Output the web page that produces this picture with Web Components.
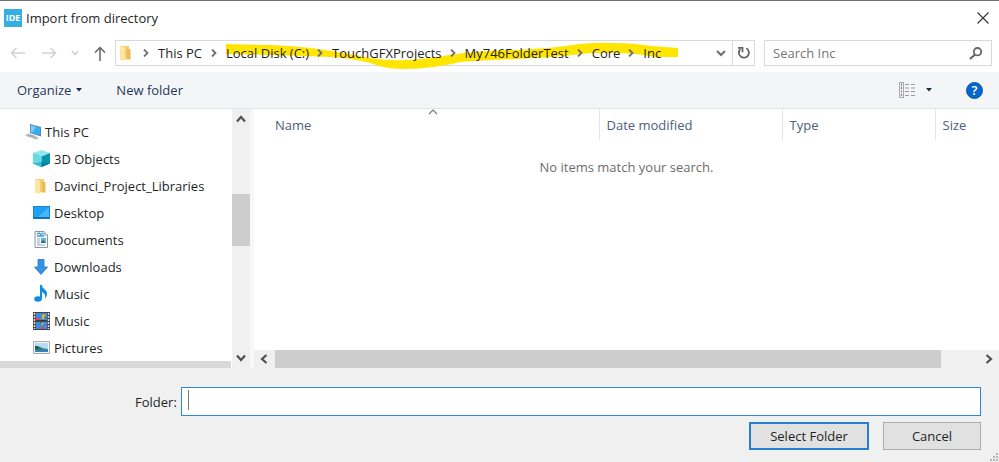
<!DOCTYPE html>
<html lang="en">
<head>
<meta charset="utf-8">
<title>Import from directory</title>
<style>
  html, body { margin: 0; height: 100%; }
  body { font: 13px/20px "Open Sans", "Noto Sans", sans-serif; color: #1f1f1f; }
</style>
</head>
<body>
<import-dialog>
  <title-bar slot="title">Import from directory</title-bar>
  <address-bar slot="address">
    <path-crumb>This PC</path-crumb>
    <path-crumb slot="marked">Local Disk (C:)</path-crumb>
    <path-crumb slot="marked">TouchGFXProjects</path-crumb>
    <path-crumb slot="marked">My746FolderTest</path-crumb>
    <path-crumb slot="marked">Core</path-crumb>
    <path-crumb slot="marked">Inc</path-crumb>
  </address-bar>
  <command-bar slot="commands"></command-bar>
  <nav-tree slot="tree">
    <tree-item icon="pc" root>This PC</tree-item>
    <tree-item icon="cube">3D Objects</tree-item>
    <tree-item icon="folder">Davinci_Project_Libraries</tree-item>
    <tree-item icon="desktop">Desktop</tree-item>
    <tree-item icon="document">Documents</tree-item>
    <tree-item icon="download">Downloads</tree-item>
    <tree-item icon="note">Music</tree-item>
    <tree-item icon="film">Music</tree-item>
    <tree-item icon="picture">Pictures</tree-item>
  </nav-tree>
  <file-list slot="files">No items match your search.</file-list>
  <folder-form slot="form"></folder-form>
</import-dialog>

<script>
// Icon artwork, keyed by name: [viewBox width, viewBox height, markup]
const ICONS = {
  ide: [18, 18, `<rect width="18" height="18" fill="#35aee2"/>
    <text x="9" y="12" text-anchor="middle" font-family="Open Sans, sans-serif" font-size="9" font-weight="700" fill="#fff">IDE</text>`],
  close: [12, 12, `<path d="M.5.5l11 11M11.5.5l-11 11" stroke="#333" stroke-width="1.1"/>`],
  back: [16, 12, `<path d="M15 6H1.5M6.5 1l-5 5 5 5" fill="none" stroke="#d2d2d2" stroke-width="1.5"/>`],
  forward: [16, 12, `<path d="M1 6h13.500M9.500 1l5 5-5 5" fill="none" stroke="#d2d2d2" stroke-width="1.5"/>`],
  recent: [8, 6, `<path d="M1 1l3 3.500L7 1" fill="none" stroke="#cfcfcf" stroke-width="1.6"/>`],
  up: [12, 15, `<path d="M6 15V1.500M1 6.500l5-5 5 5" fill="none" stroke="#666" stroke-width="1.5"/>`],
  crumb: [6, 8, `<path d="M1 .5L4.500 4 1 7.500" fill="none" stroke="#707070" stroke-width="1.8"/>`],
  drop: [10, 7, `<path d="M1 1l4 4 4-4" fill="none" stroke="#707070" stroke-width="2"/>`],
  refresh: [14, 14, `<path d="M9.300 2.300A5 5 0 1 1 3.300 3.200" fill="none" stroke="#666" stroke-width="1.8"/><path d="M1 1.800h4.500v4.500" fill="none" stroke="#666" stroke-width="1.8"/>`],
  search: [14, 13, `<circle cx="8.500" cy="4.700" r="3.700" fill="none" stroke="#666" stroke-width="1.8"/><path d="M6 7.500L1 12" stroke="#666" stroke-width="2.2"/>`],
  caret: [6, 4, `<path d="M0 0h6L3 3.500z" fill="#17305a"/>`],
  view: [16, 16, `<rect x=".5" y=".5" width="4" height="15" fill="#eee" stroke="#aaa"/>
    <path d="M2 2.500h1M2 13h1" stroke="#557a9e" stroke-width="2"/><path d="M2 6h1" stroke="#4c9a62" stroke-width="2"/><path d="M2 9.500h1" stroke="#e46a45" stroke-width="2"/>
    <path d="M6 2.500h10M6 6h10M6 9.500h10M6 13.500h10" stroke="#9a9a9a" stroke-dasharray="4 2"/>`],
  help: [17, 17, `<circle cx="8.500" cy="8.500" r="8" fill="#0666cc" stroke="#155aa6"/>
    <text x="8.500" y="13" text-anchor="middle" font-family="Open Sans, sans-serif" font-size="13" font-weight="600" fill="#fff">?</text>`],
  sort: [10, 6, `<path d="M1 5l4-4 4 4" fill="none" stroke="#777" stroke-width="1.2"/>`],
  arrow: [10, 8, `<path d="M1 6.500l4-4.500 4 4.500" fill="none" stroke="#505050" stroke-width="2.2"/>`],
  grip: [9, 9, `<path d="M6 0h2v2H6zM6 3h2v2H6zM3 3h2v2H3zM0 6h2v2H0zM3 6h2v2H3zM6 6h2v2H6z" fill="#b5b5b5"/>`],
  folder: [16, 18, `<path d="M2 2h9v13l-9 1z" fill="#f4cd70"/><path d="M9 5h3.500v10.500H9z" fill="#eabb54"/><path d="M2 2l5 1.500V17l-5-1.500z" fill="#ffe6a0"/>`],
  pc: [18, 16, `<path d="M6 0l11 3v9.500L6 9z" fill="#5b87a7"/><path d="M6.800 1.200L16 3.800v7.300L6.800 8.200z" fill="#36aef5"/><path d="M6.800 1.200L12 2.700 8.500 8.600l-1.700-.5z" fill="#77cafa"/>
    <path d="M1 11l4-1.500 8 2.700-3.500 2z" fill="#c2cbd2"/><path d="M2 11.500l7 2M4 10.600l7 2" stroke="#8797a3" stroke-width=".7"/><path d="M8 14l4 1.500 3-1.500-3-1z" fill="#a8b4bd"/>`],
  cube: [17, 17, `<path d="M8.500 0L17 3 8.500 6.500 0 3z" fill="#8ee9ed"/><path d="M0 3l8.500 3.500V17L0 13.500z" fill="#28b9cd"/><path d="M17 3L8.500 6.500V17L17 13.500z" fill="#0793ad"/>
    <path d="M0 3l8.500 3.500v5.500L0 13.500z" fill="#65dce4"/><path d="M8.500 12L17 13.500 8.500 17 0 13.500z" fill="#39bccb"/><path d="M8.500 12l8.500 1.500L8.500 17z" fill="#087f9d"/>`],
  desktop: [17, 13, `<path d="M0 0h17v13H0z" fill="#1684d2"/><path d="M1 1h15v10H1z" fill="#20a0f3"/><path d="M16 1v10H5z" fill="#48b4fa"/><path d="M1 12h15" stroke="#0866a7"/>`],
  document: [14, 17, `<path d="M1 .5h9L13.500 4v12.500H1z" fill="#f6f8f9" stroke="#8c969d"/><path d="M10 .5V4h3.500" fill="#d4dade" stroke="#9da7ad"/>
    <path d="M3 5h7M3 3l2-1 2 1.500L9 2" fill="none" stroke="#3aa4d8" stroke-width="1.4"/><path d="M3 8h3M3 10h3M3 12h3M3 14h8" stroke="#9daebb"/><path d="M7 7h5v5H7z" fill="#5cb6df"/><path d="M7 11l2-2 3 3H7z" fill="#3d6b77"/>`],
  download: [14, 16, `<path d="M4 .5h6V8h3.500L7 15.500.5 8H4z" fill="#3294e4" stroke="#2476bd" stroke-width=".8"/>`],
  note: [14, 17, `<ellipse cx="4" cy="14" rx="3.800" ry="2.800" fill="#0c8fe5"/><path d="M6 0h2c0 4 5 4 5 9 0 2-1 3.500-2 4.500C12 9.500 10 8 8 7v7H6z" fill="#0c8fe5"/>`],
  film: [17, 18, `<path d="M0 0h17v18H0z" fill="#444"/><path d="M1.500 1v16M15.500 1v16" stroke="#ddd" stroke-width="1.5" stroke-dasharray="2 1"/>
    <path d="M3 1h11v7H3zM3 9.500h11V17H3z" fill="#4288dd"/><path d="M3 6h3l2 2H3zM9 14l2 1-1 2H8z" fill="#da4a43"/><path d="M9 3l2-1 2 2-2 3H9zM8 11l3 0-1 2-2-1z" fill="#e9b735"/><path d="M11 4l2 1-1 2zM7 10l2 1-2 1z" fill="#267f45"/><path d="M3 9h11" stroke="#263347"/>`],
  picture: [17, 13, `<path d="M.5.500h16v12H.5z" fill="#f4f4f4" stroke="#aaa"/><path d="M2 2h13v9H2z" fill="#b6dcf4"/><path d="M2 5c4-1 5 3 13 3v3H2z" fill="#32766c"/><path d="M2 9l13-1v3H2z" fill="#3186b7"/><path d="M2 5l5 2-5 1z" fill="#235044"/>`]
};

function icon(name) {
  const [w, h, body] = ICONS[name];
  return `<svg class="icon-${name}" width="${w}" height="${h}" viewBox="0 0 ${w} ${h}" aria-hidden="true">${body}</svg>`;
}

const BASE = `
  * { box-sizing: border-box; }
  svg { display: block; flex: none; }
  button { font: inherit; color: inherit; border: 0; padding: 0; background: none; display: flex; align-items: center; justify-content: center; }
  input { font: inherit; color: inherit; border: 0; padding: 0; outline: 0; min-width: 0; }
  a { color: inherit; text-decoration: none; }
`;

class BaseElement extends HTMLElement {
  constructor() {
    super();
    this.attachShadow({ mode: 'open' });
  }

  connectedCallback() {
    this.shadowRoot.innerHTML = `<style>${BASE}</style>${this.template()}`;
  }
}

class ImportDialog extends BaseElement {
  template() {
    return `
      <style>
        :host { display: flex; flex-direction: column; min-height: 100vh; background: #fff; border-top: 1px solid #737373; box-sizing: border-box; }
        main { display: flex; flex: 1; border-top: 1px solid #e3e6e9; }
        slot[name="files"]::slotted(*) { flex: 1; min-width: 0; }
      </style>
      <slot name="title"></slot>
      <slot name="address"></slot>
      <slot name="commands"></slot>
      <main>
        <slot name="tree"></slot>
        <slot name="files"></slot>
      </main>
      <slot name="form"></slot>
    `;
  }
}

class TitleBar extends BaseElement {
  template() {
    return `
      <style>
        :host { display: flex; align-items: center; height: 33px; padding: 0 10px 0 4px; gap: 4px; }
        h1 { flex: 1; margin: 0; font: inherit; }
        button { height: 33px; }
      </style>
      ${icon('ide')}
      <h1><slot></slot></h1>
      <button aria-label="Close">${icon('close')}</button>
    `;
  }
}

class PathCrumb extends BaseElement {
  template() {
    return `
      <style>
        :host { display: flex; align-items: center; gap: 9px; }
        a { white-space: nowrap; }
      </style>
      ${icon('crumb')}
      <a href="#"><slot></slot></a>
    `;
  }
}

class AddressBar extends BaseElement {
  template() {
    return `
      <style>
        :host { display: flex; align-items: center; height: 38px; padding: 0 7px 0 10px; gap: 9px; }
        .history { display: flex; align-items: center; height: 26px; width: 96px; justify-content: space-between; }
        .box { display: flex; align-items: center; height: 26px; border: 1px solid #d9d9d9; }
        .path { flex: 1; padding-left: 2px; min-width: 0; }
        .crumbs { display: flex; align-items: center; gap: 9px; flex: 1; padding-left: 9px; }
        .marked { position: relative; display: flex; gap: 8px; }
        .marked slot { display: contents; }
        ::slotted(*) { position: relative; }
        .marker { position: absolute; left: 15px; top: -1px; width: calc(100% + 2px); height: 28px; }
        .recent-paths { width: 22px; height: 24px; }
        .reload { width: 22px; height: 24px; border-left: 1px solid #d9d9d9; }
        .search-box { width: 228px; padding: 0 8px; }
        .search-box input { flex: 1; }
        .search-box input::placeholder { color: #767676; opacity: 1; }
      </style>
      <div class="history">
        <button aria-label="Back">${icon('back')}</button>
        <button aria-label="Forward">${icon('forward')}</button>
        <button aria-label="Recent locations">${icon('recent')}</button>
        <button aria-label="Up">${icon('up')}</button>
      </div>
      <div class="box path">
        ${icon('folder')}
        <nav class="crumbs" aria-label="Path">
          <slot></slot>
          <div class="marked">
            <svg class="marker" viewBox="226 42 451 28" preserveAspectRatio="none" aria-hidden="true">
              <path fill="#ffe500" d="M226 44L270 45Q300 46 325 50T370 58Q390 61 405 60Q430 59 448 55Q475 51 510 50Q540 49 565 46Q590 42 612 43Q632 43 650 46L677 48V57L655 57Q640 54 620 53Q598 52 580 54Q550 58 515 59Q480 60 460 62Q430 69 405 69Q384 69 370 63Q350 58 330 57Q280 55 226 54Z"/>
            </svg>
            <slot name="marked"></slot>
          </div>
        </nav>
        <button class="recent-paths" aria-label="Previous locations">${icon('drop')}</button>
        <button class="reload" aria-label="Refresh">${icon('refresh')}</button>
      </div>
      <label class="box search-box">
        <input type="search" placeholder="Search Inc" aria-label="Search Inc">
        ${icon('search')}
      </label>
    `;
  }
}

class CommandBar extends BaseElement {
  template() {
    return `
      <style>
        :host { display: flex; align-items: center; height: 36px; padding: 0 16px 0 17px; background: #f4f5f7; color: #1e395b; }
        .organize { gap: 5px; margin-right: 34px; }
        .view { gap: 11px; margin: 0 34px 0 auto; }
      </style>
      <button class="organize">Organize ${icon('caret')}</button>
      <button>New folder</button>
      <button class="view" aria-label="Change your view">${icon('view')}${icon('caret')}</button>
      <button aria-label="Help">${icon('help')}</button>
    `;
  }
}

class ScrollBar extends BaseElement {
  template() {
    // before / thumb / after are the relative lengths of the parts of the track
    const part = name => this.getAttribute(name);
    const vertical = !this.hasAttribute('horizontal');
    return `
      <style>
        :host { display: flex; flex-direction: ${vertical ? 'column' : 'row'}; flex: none; background: #f0f0f0; ${vertical ? 'width' : 'height'}: 18px; }
        button { flex: none; ${vertical ? 'height: 20px; width: 18px' : 'width: 20px; height: 18px'}; }
        button:first-of-type svg { transform: rotate(${vertical ? 0 : -90}deg); }
        button:last-of-type svg { transform: rotate(${vertical ? 180 : 90}deg); }
        .before { flex: ${part('before')}; }
        .thumb { flex: ${part('thumb')}; background: #cdcdcd; }
        .after { flex: ${part('after')}; }
      </style>
      <button aria-label="Scroll back">${icon('arrow')}</button>
      <div class="before"></div>
      <div class="thumb"></div>
      <div class="after"></div>
      <button aria-label="Scroll forward">${icon('arrow')}</button>
    `;
  }
}

class NavTree extends BaseElement {
  template() {
    return `
      <style>
        :host { display: flex; width: 254px; border-right: 4px solid #f8f8f8; box-sizing: border-box; }
        .pane { flex: 1; display: flex; flex-direction: column; border-right: 1px solid #fff; }
        .items { flex: 1; padding-top: 9px; }
        .edge { height: 7px; background: #d9d9d9; }
      </style>
      <div class="pane">
        <nav class="items" aria-label="Folders"><slot></slot></nav>
        <div class="edge"></div>
      </div>
      <scroll-bar before="65" thumb="52" after="102"></scroll-bar>
    `;
  }
}

class TreeItem extends BaseElement {
  template() {
    const root = this.hasAttribute('root');
    return `
      <style>
        :host { display: block; }
        a { display: flex; align-items: center; height: 27px; gap: 4px; padding-left: ${root ? 24 : 32}px; white-space: nowrap; }
        .picture-box { display: flex; justify-content: center; width: ${root ? 17 : 18}px; }
      </style>
      <a href="#"><span class="picture-box">${icon(this.getAttribute('icon'))}</span><slot></slot></a>
    `;
  }
}

class FileList extends BaseElement {
  template() {
    return `
      <style>
        :host { display: flex; flex-direction: column; }
        .view { flex: 1; }
        table { width: 100%; table-layout: fixed; border-collapse: collapse; }
        .name { width: 345px; }
        .date { width: 183px; }
        .type { width: 153px; }
        th { position: relative; height: 31px; padding: 0 0 0 7px; border-right: 1px solid #e5e5e5; font-weight: 400; text-align: left; color: #4c607a; }
        th:first-child { padding-left: 21px; }
        th:last-child { border-right: 0; }
        .icon-sort { position: absolute; left: calc(50% + 2px); top: 0; }
        td { padding-top: 17px; text-align: center; color: #6d6d6d; }
      </style>
      <div class="view">
        <table>
          <colgroup><col class="name"><col class="date"><col class="type"><col></colgroup>
          <thead>
            <tr><th>Name${icon('sort')}</th><th>Date modified</th><th>Type</th><th>Size</th></tr>
          </thead>
          <tbody>
            <tr><td colspan="4"><slot></slot></td></tr>
          </tbody>
        </table>
      </div>
      <scroll-bar horizontal before="1" thumb="666" after="38"></scroll-bar>
    `;
  }
}

class FolderForm extends BaseElement {
  template() {
    return `
      <style>
        :host { display: block; position: relative; background: #f0f0f0; }
        form { padding: 19px 18px 12px 135px; }
        .field { display: flex; align-items: center; gap: 4px; }
        .text-box { display: flex; flex: 1; height: 29px; padding: 2px 6px; background: #fff; border: 1px solid #2b88d8; }
        .text-box input { flex: 1; border-left: 1px solid #777; padding-left: 1px; background: none; height: 20px; }
        .actions { display: flex; justify-content: flex-end; gap: 14px; margin-top: 6px; }
        .actions button { width: 98px; height: 28px; background: #e1e1e1; border: 1px solid #adadad; }
        .actions .primary { width: 120px; border: 2px solid #2680cf; }
        .icon-grip { position: absolute; right: 0; bottom: 0; }
      </style>
      <form>
        <div class="field">
          <label for="folder">Folder:</label>
          <div class="text-box"><input id="folder" type="text"></div>
        </div>
        <div class="actions">
          <button type="button" class="primary">Select Folder</button>
          <button type="button">Cancel</button>
        </div>
      </form>
      ${icon('grip')}
    `;
  }
}

customElements.define('import-dialog', ImportDialog);
customElements.define('title-bar', TitleBar);
customElements.define('path-crumb', PathCrumb);
customElements.define('address-bar', AddressBar);
customElements.define('command-bar', CommandBar);
customElements.define('scroll-bar', ScrollBar);
customElements.define('nav-tree', NavTree);
customElements.define('tree-item', TreeItem);
customElements.define('file-list', FileList);
customElements.define('folder-form', FolderForm);
</script>
</body>
</html>
